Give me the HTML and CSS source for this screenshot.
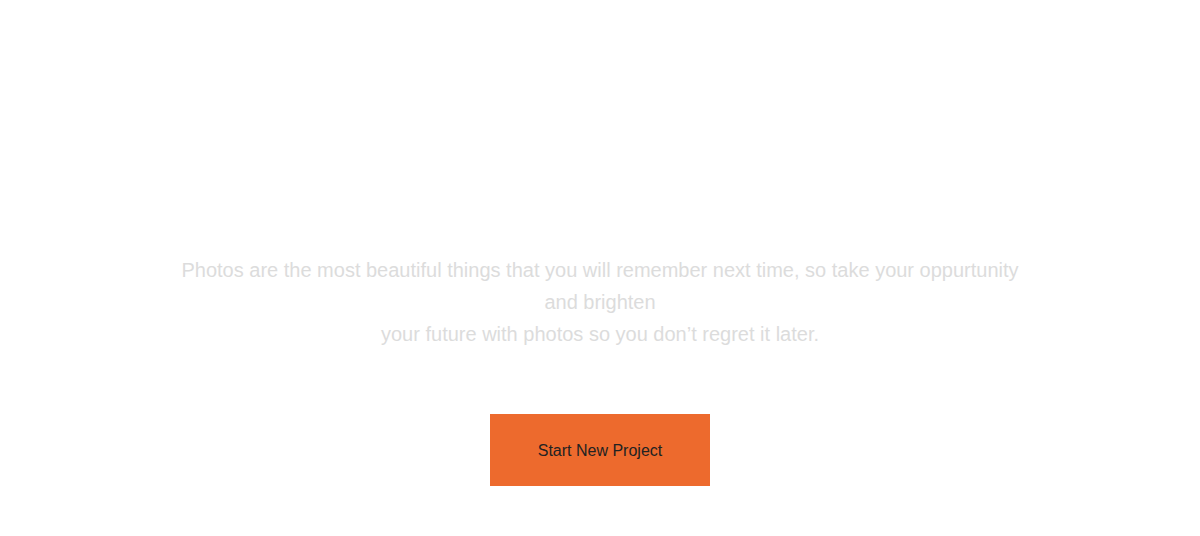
FILE: index.html
```html
<!DOCTYPE html>
<html lang="en">
<head>
<meta charset="utf-8">
<title>Start New Project</title>
<link rel="stylesheet" href="styles.css">
</head>
<body>
<section class="hero">
  <p class="lead">Photos are the most beautiful things that you will remember next time, so take your oppurtunity and brighten<br>your future with photos so you don’t regret it later.</p>
  <a class="cta" href="#">Start New Project</a>
</section>
</body>
</html>
```
FILE: styles.css
```css
* { box-sizing: border-box; }
html, body { margin: 0; padding: 0; background: #fff; }
body { font-family: "Liberation Sans", Arial, sans-serif; }
.hero {
  display: flex;
  flex-direction: column;
  align-items: center;
  padding-top: 254px;
}
.lead {
  margin: 0;
  width: 840px;
  text-align: center;
  font-size: 20px;
  line-height: 32px;
  color: #dcdcdc;
}
.cta {
  margin-top: 64px;
  width: 220px;
  height: 72px;
  padding-top: 2px;
  display: flex;
  align-items: center;
  justify-content: center;
  background: #ed6a2d;
  color: #222;
  font-size: 16px;
  text-decoration: none;
}
```
